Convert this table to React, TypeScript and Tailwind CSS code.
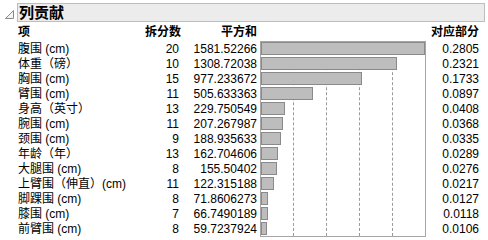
import React from "react";

const rows: { name: string; splits: number; ss: string; portion: number }[] = [
  { name: "腹围 (cm)", splits: 20, ss: "1581.52266", portion: 0.2805 },
  { name: "体重（磅）", splits: 10, ss: "1308.72038", portion: 0.2321 },
  { name: "胸围 (cm)", splits: 15, ss: "977.233672", portion: 0.1733 },
  { name: "臂围 (cm)", splits: 11, ss: "505.633363", portion: 0.0897 },
  { name: "身高（英寸）", splits: 13, ss: "229.750549", portion: 0.0408 },
  { name: "腕围 (cm)", splits: 11, ss: "207.267987", portion: 0.0368 },
  { name: "颈围 (cm)", splits: 9, ss: "188.935633", portion: 0.0335 },
  { name: "年龄（年）", splits: 13, ss: "162.704606", portion: 0.0289 },
  { name: "大腿围 (cm)", splits: 8, ss: "155.50402", portion: 0.0276 },
  { name: "上臂围（伸直）(cm)", splits: 11, ss: "122.315188", portion: 0.0217 },
  { name: "脚踝围 (cm)", splits: 8, ss: "71.8606273", portion: 0.0127 },
  { name: "膝围 (cm)", splits: 7, ss: "66.7490189", portion: 0.0118 },
  { name: "前臂围 (cm)", splits: 8, ss: "59.7237924", portion: 0.0106 },
];

const maxPortion = 0.2805;

const App = () => {
  return (
    <div className="w-[488px] h-[240px] bg-white overflow-hidden text-black font-['Liberation_Sans','Noto_Sans_CJK_SC',sans-serif] text-[12px]">
      {/* title bar */}
      <div className="flex items-center pt-[2px] pr-[3px] h-[22px]">
        <svg width="17" height="19" viewBox="0 0 17 19" className="shrink-0">
          <path d="M5.5 15.5 L13.5 15.5 L13.5 7.5 Z" fill="#f4f4f4" stroke="#8a8a8a" strokeWidth="1" />
        </svg>
        <div className="flex-1 h-[19px] bg-[#ececec] border border-[#bdbdbd] flex items-center pl-[1px]">
          <span className="font-bold text-[15px] leading-none">列贡献</span>
        </div>
      </div>

      {/* table */}
      <div className="flex pl-[18px]">
        <div className="flex flex-col w-[132px]">
          <div className="h-[20px] flex items-center font-bold pb-[1px]">项</div>
          {rows.map((r) => (
            <div key={r.name} className="h-[15px] leading-[15px] whitespace-nowrap">
              {r.name}
            </div>
          ))}
        </div>

        <div className="flex flex-col w-[31px] text-right">
          <div className="h-[20px] flex items-center justify-end font-bold whitespace-nowrap pb-[1px]">拆分数</div>
          {rows.map((r) => (
            <div key={r.name} className="h-[15px] leading-[15px] pr-[2px]">
              {r.splits}
            </div>
          ))}
        </div>

        <div className="flex flex-col w-[76px] text-right">
          <div className="h-[20px] flex items-center justify-end font-bold pb-[1px]">平方和</div>
          {rows.map((r) => (
            <div key={r.name} className="h-[15px] leading-[15px]">
              {r.ss}
            </div>
          ))}
        </div>

        <div className="flex flex-col w-[166px] ml-[3px]">
          <div className="h-[19px]" />
          <div className="relative border border-[#a6a6a6] h-[196px]">
            <div className="absolute top-0 bottom-0 left-[32px] border-l border-dashed border-[#9a9a9a]" />
            <div className="absolute top-0 bottom-0 left-[65px] border-l border-dashed border-[#9a9a9a]" />
            <div className="absolute top-0 bottom-0 left-[98px] border-l border-dashed border-[#9a9a9a]" />
            <div className="absolute top-0 bottom-0 left-[131px] border-l border-dashed border-[#9a9a9a]" />
            <div className="relative flex flex-col">
              {rows.map((r) => (
                <div key={r.name} className="h-[15px]">
                  <div
                    className="h-[13px] bg-[#bdbdbd] border-[1.5px] border-[#8a8a8a]"
                    style={{ width: Math.round((r.portion / maxPortion) * 164) }}
                  />
                </div>
              ))}
            </div>
          </div>
        </div>

        <div className="flex flex-col w-[53px] text-right">
          <div className="h-[20px] flex items-center justify-end font-bold whitespace-nowrap pb-[1px]">对应部分</div>
          {rows.map((r) => (
            <div key={r.name} className="h-[15px] leading-[15px]">
              {r.portion.toFixed(4)}
            </div>
          ))}
        </div>
      </div>
    </div>
  );
};

export default App;
